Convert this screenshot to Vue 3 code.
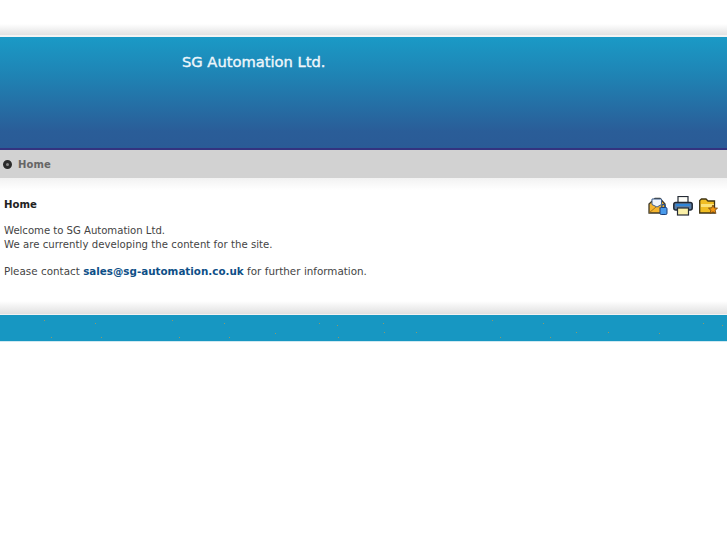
<script setup>
const lines = [
  { text: 'Welcome to SG Automation Ltd.', cls: 'tight' },
  { text: 'We are currently developing the content for the site.', cls: 'wide' }
]
const specks = [[44,5],[95,8],[172,5],[224,8],[51,22],[101,22],[179,22],[229,22],[319,8],[337,10],[275,18],[338,22],[383,8],[384,17],[492,5],[543,8],[416,17],[500,22],[550,22],[576,17],[608,17],[659,18],[703,8],[722,10]]
const paleSpecks = [5,48,102,133,177,230,272,337,384,416,453,496,550,576,608,657,722]
</script>

<template>
  <div class="page">
    <div class="top-fade"></div>
    <header class="banner"><h1 class="site-title">SG Automation Ltd.</h1></header>
    <nav class="crumbs">
      <span class="bullet"></span>
      <span class="crumb">Home</span>
    </nav>
    <main class="content">
      <div class="title-row">
        <h2 class="title">Home</h2>
        <div class="icons">
          <svg width="20" height="19" viewBox="0 0 20 19">
            <path d="M1 8 L7 2.5 H12 L17 8 V17 H1 Z" fill="#f5b52e" stroke="#3f3a2a" stroke-width="1.3"/>
            <path d="M4 3 H13.5 V8.5 L9 11 L4 8.5 Z" fill="#eef4fb" stroke="#3f5f8c"/>
            <path d="M1.5 16.5 L8 11 M16 16 L10.5 11" stroke="#a8741a" fill="none"/>
            <rect x="12" y="11.5" width="7" height="7" rx="1.2" fill="#4a9aea" stroke="#1c3e78"/>
            <path d="M13.8 11.5 V9.8 A1.8 1.8 0 0 1 17.3 9.8 V11.5" fill="none" stroke="#25508e" stroke-width="1.3"/>
          </svg>
          <svg width="20" height="20" viewBox="0 0 20 20">
            <rect x="5" y=".5" width="10" height="7" fill="#fdfdf8" stroke="#252b35" stroke-width="1.2"/>
            <rect x=".8" y="6.5" width="18.4" height="7.5" rx="2" fill="#5a7ea8" stroke="#1f2733" stroke-width="1.5"/>
            <rect x="3" y="8" width="14" height="2" fill="#2f86d8"/>
            <rect x="4.5" y="12" width="11" height="7" fill="#fbf0a8" stroke="#252b35" stroke-width="1.2"/>
          </svg>
          <svg class="folder" width="19" height="19" viewBox="0 0 19 19">
            <path d="M.7 17 V4.5 L2.5 3 H7 L9 5 H15.5 V17 Z" fill="#f0bd24" stroke="#3f3414" stroke-width="1.3"/>
            <path d="M2 8 H15 V11 H2 Z" fill="#fbe27a"/>
            <path d="M14 9 L15.3 11.9 L18.5 12.2 L16.1 14.2 L16.9 17.5 L14 15.8 L11.1 17.5 L11.9 14.2 L9.5 12.2 L12.7 11.9 Z" fill="#f4960f" stroke="#7b4a10" stroke-width=".9"/>
          </svg>
        </div>
      </div>
      <p class="copy intro">
        <template v-for="line in lines" :key="line.text"><span :class="line.cls">{{ line.text }}</span><br></template>
      </p>
      <p class="copy contact">
        Please contact <a class="mail" href="#">sales@sg-automation.co.uk</a> for further information.
      </p>
    </main>
    <div class="bottom-fade"></div>
    <footer class="footer">
      <svg class="specks" width="727" height="28" viewBox="0 0 727 28">
        <rect v-for="(s, i) in specks" :key="i" :x="s[0]" :y="s[1]" width="1" height="1" fill="#8f9a6a"/>
        <rect v-for="x in paleSpecks" :key="x" :x="x" y="27" width="1" height="1" fill="#e4edb8"/>
      </svg>
    </footer>
  </div>
</template>

<style>
html, body { margin: 0; background: #fff; }
</style>

<style scoped>
.page { font-family: "DejaVu Sans", sans-serif; font-size: 10.15px; color: #444; }
.top-fade { height: 11px; margin-top: 24px; background: linear-gradient(#fff, #e2e2e2); border-bottom: 2px solid #f4f4f4; }
.banner { height: 111px; background: linear-gradient(#1a9ac6 0, #1f83b4 35%, #2a5d98 85%, #2a5b96 100%); border-bottom: 2px solid #33337f; }
.site-title { margin: 0; padding: 17px 0 0 182px; font-size: 14.7px; line-height: 16px; font-weight: 400; color: #eef6fb; -webkit-text-stroke: .4px #eef6fb; }
.crumbs { height: 28px; background: #d2d2d2; display: flex; align-items: center; padding-left: 3px; gap: 6px; }
.bullet { width: 3px; height: 3px; border: 3px solid #2a2a2a; border-radius: 50%; background: #888; }
.crumb { font-weight: 700; font-size: 10px; letter-spacing: .1px; color: #666; }
.content { padding: 0 0 0 4px; background: linear-gradient(#f2f2f2 0, #fff 12px) no-repeat; height: 123px; box-sizing: border-box; }
.title-row { display: flex; justify-content: space-between; align-items: flex-start; padding-top: 18px; height: 46px; box-sizing: border-box; }
.title { margin: 2px 0 0; font-size: 10.15px; line-height: 13px; font-weight: 700; color: #222; }
.icons { display: flex; gap: 5px; margin-right: 9px; }
.folder { margin-left: 1px; }
.copy { margin: 0; line-height: 13.5px; }
.tight { letter-spacing: -.03px; }
.wide { letter-spacing: .04px; }
.contact { margin-top: 14px; font-size: 10.35px; word-spacing: .15px; }
.mail { color: #0e4f87; font-weight: 700; text-decoration: none; }
.bottom-fade { height: 13px; background: linear-gradient(#fff, #e0e0e0); border-bottom: 1px solid #f2f2f2; }
.footer { position: relative; height: 26px; background: #1797c2; border-bottom: 1px solid #cfe9f2; }
.specks { position: absolute; left: 0; top: 0; }
</style>
